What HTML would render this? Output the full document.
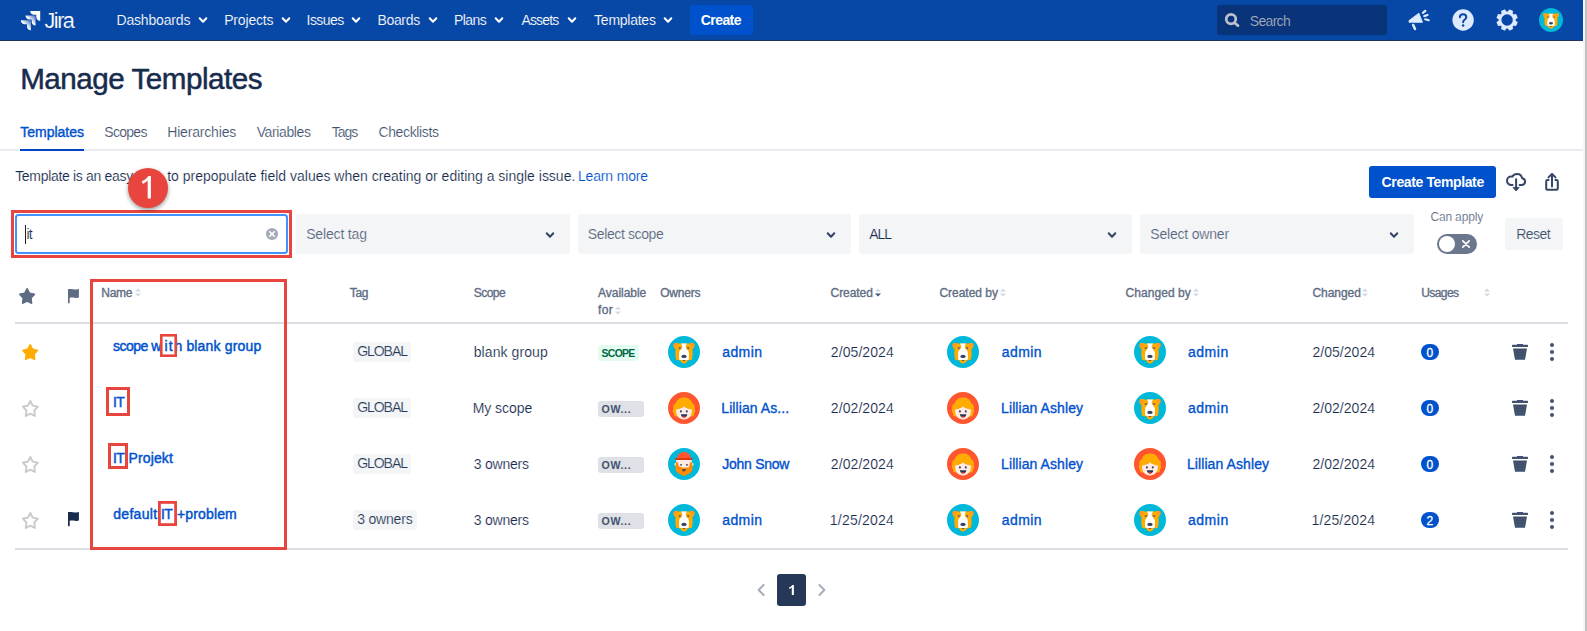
<!DOCTYPE html>
<html lang="en"><head><meta charset="utf-8"><title>Manage Templates - Jira</title>
<style>
html,body{margin:0;padding:0;background:#fff}
body{width:1587px;height:631px;overflow:hidden;position:relative;font-family:"Liberation Sans",sans-serif}
#p{position:absolute;left:0;top:0;width:1587px;height:631px;overflow:hidden}
#p>div,#p>svg,#p>span{position:absolute;display:block}
#p>span{white-space:pre;line-height:1}
</style></head>
<body><div id="p">
<div style="left:0px;top:0px;width:1583px;height:40px;background:#0747A6;border-radius:0px;"></div>
<div style="left:0px;top:40px;width:1583px;height:1px;background:#20335B;border-radius:0px;"></div>
<div style="left:1583px;top:0px;width:2px;height:631px;background:#F6F6F6;border-radius:0px;"></div>
<div style="left:1585px;top:0px;width:2px;height:631px;background:#C2C2C2;border-radius:0px;"></div>
<div style="left:690px;top:5px;width:63px;height:30px;background:#0052CC;border-radius:3px;"></div>
<div style="left:1217px;top:5px;width:170px;height:30px;background:#093479;border-radius:3px;"></div>
<svg style="left:197.3px;top:15px" width="12" height="10" viewBox="0 0 12 10"><path d="M2.7 3.2L6 6.800000000000001L9.3 3.2" fill="none" stroke="#FFFFFF" stroke-width="2" stroke-linecap="round" stroke-linejoin="round"/></svg>
<svg style="left:280.0px;top:15px" width="12" height="10" viewBox="0 0 12 10"><path d="M2.7 3.2L6 6.800000000000001L9.3 3.2" fill="none" stroke="#FFFFFF" stroke-width="2" stroke-linecap="round" stroke-linejoin="round"/></svg>
<svg style="left:350.4px;top:15px" width="12" height="10" viewBox="0 0 12 10"><path d="M2.7 3.2L6 6.800000000000001L9.3 3.2" fill="none" stroke="#FFFFFF" stroke-width="2" stroke-linecap="round" stroke-linejoin="round"/></svg>
<svg style="left:427.0px;top:15px" width="12" height="10" viewBox="0 0 12 10"><path d="M2.7 3.2L6 6.800000000000001L9.3 3.2" fill="none" stroke="#FFFFFF" stroke-width="2" stroke-linecap="round" stroke-linejoin="round"/></svg>
<svg style="left:493.2px;top:15px" width="12" height="10" viewBox="0 0 12 10"><path d="M2.7 3.2L6 6.800000000000001L9.3 3.2" fill="none" stroke="#FFFFFF" stroke-width="2" stroke-linecap="round" stroke-linejoin="round"/></svg>
<svg style="left:566.0px;top:15px" width="12" height="10" viewBox="0 0 12 10"><path d="M2.7 3.2L6 6.800000000000001L9.3 3.2" fill="none" stroke="#FFFFFF" stroke-width="2" stroke-linecap="round" stroke-linejoin="round"/></svg>
<svg style="left:662.2px;top:15px" width="12" height="10" viewBox="0 0 12 10"><path d="M2.7 3.2L6 6.800000000000001L9.3 3.2" fill="none" stroke="#FFFFFF" stroke-width="2" stroke-linecap="round" stroke-linejoin="round"/></svg>
<svg style="left:20px;top:10px" width="21" height="21" viewBox="0 0 21 21"><defs><linearGradient id="jg" x1="1" y1="0" x2="0.35" y2="0.65"><stop offset="0.1" stop-color="#fff" stop-opacity=".3"/><stop offset="0.8" stop-color="#fff"/></linearGradient></defs>
<path d="M10.2 .9L20.2 .9L20.2 10.9C18 10.9 16.3 9.2 16.3 7L16.3 4.8L14.1 4.8C11.9 4.8 10.2 3.1 10.2 .9Z" fill="#fff"/>
<path d="M5.5 5.5L15.6 5.5L15.6 15.6C13.4 15.6 11.7 13.9 11.7 11.7L11.7 9.5L9.4 9.5C7.2 9.5 5.5 7.7 5.5 5.5Z" fill="url(#jg)"/>
<path d="M.8 10.2L10.9 10.2L10.9 20.3C8.7 20.3 7 18.6 7 16.4L7 14.2L4.7 14.2C2.5 14.2 .8 12.4 .8 10.2Z" fill="url(#jg)"/></svg>
<svg style="left:1223px;top:12px" width="18" height="18" viewBox="0 0 18 18"><circle cx="8" cy="7.1" r="4.8" fill="none" stroke="#BCC1CD" stroke-width="2.7"/><path d="M11.8 11L15 13.6" stroke="#BCC1CD" stroke-width="2.7" stroke-linecap="round"/></svg>
<svg style="left:1406px;top:8px" width="26" height="24" viewBox="0 0 26 24"><path d="M3 12.6L3 14.2L16.4 14.3L12.9 5.2Z" fill="#DEEBFF" stroke="#DEEBFF" stroke-width=".9" stroke-linejoin="round"/><path d="M7.2 17L9 21" stroke="#DEEBFF" stroke-width="2.5" stroke-linecap="round"/><path d="M16.9 4.9L19.3 2.8M18.3 8.1L21.5 7M19.2 11.3L22.7 12.2" stroke="#DEEBFF" stroke-width="2.2" stroke-linecap="round"/></svg>
<svg style="left:1451px;top:8px" width="24" height="24" viewBox="0 0 24 24"><circle cx="12.1" cy="12" r="10.7" fill="#DEEBFF"/><path d="M8.9 9.3C8.9 7.5 10.3 6.3 12.1 6.3C13.9 6.3 15.3 7.5 15.3 9.2C15.3 11.6 12.1 11.6 12.1 14.3" fill="none" stroke="#0747A6" stroke-width="2" stroke-linecap="round"/><circle cx="12.1" cy="17.6" r="1.25" fill="#0747A6"/></svg>
<svg style="left:1495px;top:8px" width="24" height="24" viewBox="0 0 24 24"><path d="M22.02 14.38L20.80 17.33L18.62 16.81L16.91 18.52L17.43 20.70L14.48 21.92L13.30 20.01L10.90 20.01L9.72 21.92L6.77 20.70L7.29 18.52L5.58 16.81L3.40 17.33L2.18 14.38L4.09 13.20L4.09 10.80L2.18 9.62L3.40 6.67L5.58 7.19L7.29 5.48L6.77 3.30L9.72 2.08L10.90 3.99L13.30 3.99L14.48 2.08L17.43 3.30L16.91 5.48L18.62 7.19L20.80 6.67L22.02 9.62L20.11 10.80L20.11 13.20Z" fill="#DEEBFF" stroke="#DEEBFF" stroke-width="1.2" stroke-linejoin="round"/><circle cx="12.1" cy="12" r="5.7" fill="#0747A6"/></svg>
<svg class="av" style="left:1539px;top:8px" width="24" height="24" viewBox="0 0 32 32"><circle cx="16" cy="16" r="16" fill="#00B8D9"/><path d="M10 7.3C7.8 6.1 5.4 6.9 5.3 9C5.2 10.7 6 12.3 7.7 13.3L10.6 12Z" fill="#FF991F"/><path d="M22 7.3C24.2 6.1 26.6 6.9 26.7 9C26.8 10.7 26 12.3 24.3 13.3L21.4 12Z" fill="#FF991F"/><path d="M9.2 7.5L22.8 7.5C24 10 24.8 14 24.7 18C24.6 20.5 24.2 22.5 23.6 24L19.8 24.2C19.4 26.2 17.9 27.4 16 27.4C14.1 27.4 12.6 26.2 12.2 24.2L8.4 24C7.8 22.5 7.4 20.5 7.3 18C7.2 14 8 10 9.2 7.5Z" fill="#FFAB00"/><path d="M13 7.5L19 7.5L17.7 10.2C17.7 12.2 18.4 13 19.5 14C20.5 15 20.9 16 20.9 17.4L20.9 22.4C20.9 23.4 20.2 24.1 19.2 24.1L12.8 24.1C11.8 24.1 11.1 23.4 11.1 22.4L11.1 17.4C11.1 16 11.5 15 12.5 14C13.6 13 14.3 12.2 14.3 10.2Z" fill="#FFFFFF"/><ellipse cx="16" cy="20.4" rx="2.7" ry="1.65" fill="#344563"/><path d="M14.7 23.9L17.3 23.9L16 25.3Z" fill="#344563"/><rect x="10.8" y="11" width="1.9" height="2.1" rx=".6" fill="#5E6C84"/><rect x="19.3" y="11" width="1.9" height="2.1" rx=".6" fill="#5E6C84"/></svg>
<div style="left:0px;top:149px;width:1583px;height:2px;background:#EAEBF0;border-radius:0px;"></div>
<div style="left:19px;top:149px;width:1px;height:2px;background:#FFFFFF;border-radius:0px;"></div>
<div style="left:20px;top:149px;width:64px;height:2px;background:#0045C8;border-radius:0px;"></div>
<div style="left:1369px;top:166px;width:127px;height:32px;background:#0052CC;border-radius:3px;"></div>
<svg style="left:1504px;top:171px" width="24" height="22" viewBox="0 0 24 22"><path d="M8.6 14L7.4 14C4.9 14 3 12.1 3 9.7C3 7.3 4.9 5.5 7.2 5.5C7.6 5.5 8 5.55 8.4 5.65C9.3 3.9 11 2.9 13 2.9C15.6 2.9 17.7 4.7 18.1 7.2C19.8 7.5 21.1 8.9 21.1 10.6C21.1 12.5 19.6 14 17.7 14L15.6 14" fill="none" stroke="#344563" stroke-width="2" stroke-linecap="round" stroke-linejoin="round"/><path d="M12.1 8.2L12.1 17" stroke="#344563" stroke-width="2" stroke-linecap="round"/><path d="M9 16.4L15.2 16.4L12.1 20Z" fill="#344563" stroke="#344563" stroke-width=".8" stroke-linejoin="round"/></svg>
<svg style="left:1542px;top:170px" width="20" height="24" viewBox="0 0 20 24"><path d="M6.6 10.1L5.4 10.1C4.7 10.1 4.2 10.6 4.2 11.3L4.2 18.6C4.2 19.3 4.7 19.8 5.4 19.8L14.6 19.8C15.3 19.8 15.8 19.3 15.8 18.6L15.8 11.3C15.8 10.6 15.3 10.1 14.6 10.1L13.4 10.1" fill="none" stroke="#344563" stroke-width="2" stroke-linecap="round" stroke-linejoin="round"/><path d="M10 4.8L10 16.4M6.5 7.4L10 3.9L13.5 7.4" fill="none" stroke="#344563" stroke-width="2" stroke-linecap="round" stroke-linejoin="round"/></svg>
<div style="left:15px;top:214px;width:273px;height:40px;background:#FFFFFF;border-radius:3.5px;box-sizing:border-box;border:2px solid #4492FF;"></div>
<div style="left:25px;top:225px;width:1px;height:19px;background:#1E1E1E;border-radius:0px;"></div>
<svg style="left:265px;top:227px" width="14" height="14" viewBox="0 0 14 14"><circle cx="7" cy="7" r="6.1" fill="#A3ABB9"/><path d="M4.7 4.7L9.3 9.3M9.3 4.7L4.7 9.3" stroke="#fff" stroke-width="1.6" stroke-linecap="round"/></svg>
<div style="left:296px;top:214px;width:274px;height:40px;background:#F4F5F7;border-radius:3px;"></div>
<svg style="left:544px;top:229.5px" width="12" height="10" viewBox="0 0 12 10"><path d="M2.7 3.2L6 6.800000000000001L9.3 3.2" fill="none" stroke="#344563" stroke-width="2" stroke-linecap="round" stroke-linejoin="round"/></svg>
<div style="left:578px;top:214px;width:273px;height:40px;background:#F4F5F7;border-radius:3px;"></div>
<svg style="left:825px;top:229.5px" width="12" height="10" viewBox="0 0 12 10"><path d="M2.7 3.2L6 6.800000000000001L9.3 3.2" fill="none" stroke="#344563" stroke-width="2" stroke-linecap="round" stroke-linejoin="round"/></svg>
<div style="left:859px;top:214px;width:273px;height:40px;background:#F4F5F7;border-radius:3px;"></div>
<svg style="left:1106px;top:229.5px" width="12" height="10" viewBox="0 0 12 10"><path d="M2.7 3.2L6 6.800000000000001L9.3 3.2" fill="none" stroke="#344563" stroke-width="2" stroke-linecap="round" stroke-linejoin="round"/></svg>
<div style="left:1140px;top:214px;width:274px;height:40px;background:#F4F5F7;border-radius:3px;"></div>
<svg style="left:1388px;top:229.5px" width="12" height="10" viewBox="0 0 12 10"><path d="M2.7 3.2L6 6.800000000000001L9.3 3.2" fill="none" stroke="#344563" stroke-width="2" stroke-linecap="round" stroke-linejoin="round"/></svg>
<div style="left:1437px;top:234px;width:40px;height:20px;background:#6B778C;border-radius:10px;"></div>
<div style="left:1439px;top:236px;width:16px;height:16px;background:#FFFFFF;border-radius:8px;"></div>
<svg style="left:1461px;top:239px" width="10" height="10" viewBox="0 0 10 10"><path d="M1.8 1.8L8.2 8.2M8.2 1.8L1.8 8.2" stroke="#fff" stroke-width="1.7" stroke-linecap="round"/></svg>
<div style="left:1505px;top:218px;width:58px;height:32px;background:#F4F5F7;border-radius:3px;"></div>
<svg style="left:16.9px;top:285.8px" width="20.2" height="20" viewBox="0 0 20.2 20"><path d="M10.10 2.70L12.57 7.24L17.50 8.28L14.10 12.12L14.67 17.30L10.10 15.13L5.53 17.30L6.10 12.12L2.70 8.28L7.63 7.24Z" fill="#5E6C84" stroke="#5E6C84" stroke-width="1.4" stroke-linejoin="round"/></svg>
<svg style="left:66px;top:286.6px" width="16" height="19" viewBox="-2 -2 16 19"><rect x="0" y=".2" width="1.7" height="14.1" rx=".6" fill="#5E6C84"/><path d="M0 .2C2 -.3 5 -.2 7 .4C8.5 .7 9.8 .5 10.9 .1L10.9 8.6C9.8 9 8.5 9.1 7 8.8C5 8.4 3 8.4 1.7 8.7L0 8.7Z" fill="#5E6C84"/></svg>
<svg style="left:134.7px;top:288.2px" width="6" height="9" viewBox="0 0 6 9"><path d="M0 3.6L3 .6L6 3.6Z" fill="#D3D7DF"/><path d="M0 5.4L3 8.4L6 5.4Z" fill="#D3D7DF"/></svg>
<svg style="left:614.8px;top:305.5px" width="6" height="9" viewBox="0 0 6 9"><path d="M0 3.6L3 .6L6 3.6Z" fill="#D3D7DF"/><path d="M0 5.4L3 8.4L6 5.4Z" fill="#D3D7DF"/></svg>
<svg style="left:875.2px;top:288.2px" width="6" height="9" viewBox="0 0 6 9"><path d="M0 3.6L3 .6L6 3.6Z" fill="#D3D7DF"/><path d="M0 5.4L3 8.4L6 5.4Z" fill="#42526E"/></svg>
<svg style="left:1000px;top:288.2px" width="6" height="9" viewBox="0 0 6 9"><path d="M0 3.6L3 .6L6 3.6Z" fill="#D3D7DF"/><path d="M0 5.4L3 8.4L6 5.4Z" fill="#D3D7DF"/></svg>
<svg style="left:1193px;top:288.2px" width="6" height="9" viewBox="0 0 6 9"><path d="M0 3.6L3 .6L6 3.6Z" fill="#D3D7DF"/><path d="M0 5.4L3 8.4L6 5.4Z" fill="#D3D7DF"/></svg>
<svg style="left:1362.2px;top:288.2px" width="6" height="9" viewBox="0 0 6 9"><path d="M0 3.6L3 .6L6 3.6Z" fill="#D3D7DF"/><path d="M0 5.4L3 8.4L6 5.4Z" fill="#D3D7DF"/></svg>
<svg style="left:1484px;top:288.2px" width="6" height="9" viewBox="0 0 6 9"><path d="M0 3.6L3 .6L6 3.6Z" fill="#D3D7DF"/><path d="M0 5.4L3 8.4L6 5.4Z" fill="#D3D7DF"/></svg>
<div style="left:15px;top:322px;width:1553px;height:2px;background:#DDDFE6;border-radius:0px;"></div>
<div style="left:15px;top:548px;width:1553px;height:2px;background:#DDDFE6;border-radius:0px;"></div>
<svg style="left:19.9px;top:341.9px" width="20.3" height="20.2" viewBox="0 0 20.3 20.2"><path d="M10.15 2.70L12.64 7.31L17.60 8.35L14.17 12.25L14.75 17.50L10.15 15.30L5.55 17.50L6.13 12.25L2.70 8.35L7.66 7.31Z" fill="#FFAB00" stroke="#FFAB00" stroke-width="1.4" stroke-linejoin="round"/></svg>
<div style="left:353px;top:342px;width:58px;height:20px;background:#F4F5F7;border-radius:3px;"></div>
<div style="left:598px;top:345px;width:41px;height:16px;background:#E3FCEF;border-radius:3px;"></div>
<svg class="av" style="left:668px;top:336px" width="32" height="32" viewBox="0 0 32 32"><circle cx="16" cy="16" r="16" fill="#00B8D9"/><path d="M10 7.3C7.8 6.1 5.4 6.9 5.3 9C5.2 10.7 6 12.3 7.7 13.3L10.6 12Z" fill="#FF991F"/><path d="M22 7.3C24.2 6.1 26.6 6.9 26.7 9C26.8 10.7 26 12.3 24.3 13.3L21.4 12Z" fill="#FF991F"/><path d="M9.2 7.5L22.8 7.5C24 10 24.8 14 24.7 18C24.6 20.5 24.2 22.5 23.6 24L19.8 24.2C19.4 26.2 17.9 27.4 16 27.4C14.1 27.4 12.6 26.2 12.2 24.2L8.4 24C7.8 22.5 7.4 20.5 7.3 18C7.2 14 8 10 9.2 7.5Z" fill="#FFAB00"/><path d="M13 7.5L19 7.5L17.7 10.2C17.7 12.2 18.4 13 19.5 14C20.5 15 20.9 16 20.9 17.4L20.9 22.4C20.9 23.4 20.2 24.1 19.2 24.1L12.8 24.1C11.8 24.1 11.1 23.4 11.1 22.4L11.1 17.4C11.1 16 11.5 15 12.5 14C13.6 13 14.3 12.2 14.3 10.2Z" fill="#FFFFFF"/><ellipse cx="16" cy="20.4" rx="2.7" ry="1.65" fill="#344563"/><path d="M14.7 23.9L17.3 23.9L16 25.3Z" fill="#344563"/><rect x="10.8" y="11" width="1.9" height="2.1" rx=".6" fill="#5E6C84"/><rect x="19.3" y="11" width="1.9" height="2.1" rx=".6" fill="#5E6C84"/></svg>
<svg class="av" style="left:947px;top:336px" width="32" height="32" viewBox="0 0 32 32"><circle cx="16" cy="16" r="16" fill="#00B8D9"/><path d="M10 7.3C7.8 6.1 5.4 6.9 5.3 9C5.2 10.7 6 12.3 7.7 13.3L10.6 12Z" fill="#FF991F"/><path d="M22 7.3C24.2 6.1 26.6 6.9 26.7 9C26.8 10.7 26 12.3 24.3 13.3L21.4 12Z" fill="#FF991F"/><path d="M9.2 7.5L22.8 7.5C24 10 24.8 14 24.7 18C24.6 20.5 24.2 22.5 23.6 24L19.8 24.2C19.4 26.2 17.9 27.4 16 27.4C14.1 27.4 12.6 26.2 12.2 24.2L8.4 24C7.8 22.5 7.4 20.5 7.3 18C7.2 14 8 10 9.2 7.5Z" fill="#FFAB00"/><path d="M13 7.5L19 7.5L17.7 10.2C17.7 12.2 18.4 13 19.5 14C20.5 15 20.9 16 20.9 17.4L20.9 22.4C20.9 23.4 20.2 24.1 19.2 24.1L12.8 24.1C11.8 24.1 11.1 23.4 11.1 22.4L11.1 17.4C11.1 16 11.5 15 12.5 14C13.6 13 14.3 12.2 14.3 10.2Z" fill="#FFFFFF"/><ellipse cx="16" cy="20.4" rx="2.7" ry="1.65" fill="#344563"/><path d="M14.7 23.9L17.3 23.9L16 25.3Z" fill="#344563"/><rect x="10.8" y="11" width="1.9" height="2.1" rx=".6" fill="#5E6C84"/><rect x="19.3" y="11" width="1.9" height="2.1" rx=".6" fill="#5E6C84"/></svg>
<svg class="av" style="left:1134px;top:336px" width="32" height="32" viewBox="0 0 32 32"><circle cx="16" cy="16" r="16" fill="#00B8D9"/><path d="M10 7.3C7.8 6.1 5.4 6.9 5.3 9C5.2 10.7 6 12.3 7.7 13.3L10.6 12Z" fill="#FF991F"/><path d="M22 7.3C24.2 6.1 26.6 6.9 26.7 9C26.8 10.7 26 12.3 24.3 13.3L21.4 12Z" fill="#FF991F"/><path d="M9.2 7.5L22.8 7.5C24 10 24.8 14 24.7 18C24.6 20.5 24.2 22.5 23.6 24L19.8 24.2C19.4 26.2 17.9 27.4 16 27.4C14.1 27.4 12.6 26.2 12.2 24.2L8.4 24C7.8 22.5 7.4 20.5 7.3 18C7.2 14 8 10 9.2 7.5Z" fill="#FFAB00"/><path d="M13 7.5L19 7.5L17.7 10.2C17.7 12.2 18.4 13 19.5 14C20.5 15 20.9 16 20.9 17.4L20.9 22.4C20.9 23.4 20.2 24.1 19.2 24.1L12.8 24.1C11.8 24.1 11.1 23.4 11.1 22.4L11.1 17.4C11.1 16 11.5 15 12.5 14C13.6 13 14.3 12.2 14.3 10.2Z" fill="#FFFFFF"/><ellipse cx="16" cy="20.4" rx="2.7" ry="1.65" fill="#344563"/><path d="M14.7 23.9L17.3 23.9L16 25.3Z" fill="#344563"/><rect x="10.8" y="11" width="1.9" height="2.1" rx=".6" fill="#5E6C84"/><rect x="19.3" y="11" width="1.9" height="2.1" rx=".6" fill="#5E6C84"/></svg>
<div style="left:1421px;top:344px;width:18px;height:16px;background:#0052CC;border-radius:8px;"></div>
<svg style="left:1510px;top:342px" width="20" height="20" viewBox="0 0 20 20"><path d="M7 2L13 2L13 3L7 3Z" fill="#42526E"/><rect x="2" y="2.8" width="16" height="2.1" rx=".5" fill="#42526E"/><path d="M3 6.6L17 6.6L15 17.8L5 17.8Z" fill="#42526E"/></svg>
<div style="left:1550.1px;top:343.0px;width:3.8px;height:3.8px;background:#42526E;border-radius:2px;"></div>
<div style="left:1550.1px;top:350.1px;width:3.8px;height:3.8px;background:#42526E;border-radius:2px;"></div>
<div style="left:1550.1px;top:357.20000000000005px;width:3.8px;height:3.8px;background:#42526E;border-radius:2px;"></div>
<svg style="left:19.6px;top:397.8px" width="20.7" height="20.9" viewBox="0 0 20.7 20.9"><path d="M10.35 2.90L12.74 7.74L17.80 8.67L14.22 12.59L14.95 18.00L10.35 15.59L5.75 18.00L6.48 12.59L2.90 8.67L7.96 7.74Z" fill="none" stroke="#C8C8C8" stroke-width="1.8" stroke-linejoin="round"/></svg>
<div style="left:353px;top:398px;width:58px;height:20px;background:#F4F5F7;border-radius:3px;"></div>
<div style="left:598px;top:401px;width:46px;height:16px;background:#DFE1E6;border-radius:3px;"></div>
<svg class="av" style="left:668px;top:392px" width="32" height="32" viewBox="0 0 32 32"><circle cx="16" cy="16" r="16" fill="#FF5630"/><path d="M16 5.4C20.6 5.4 23.6 8 24.4 11.4C26.4 12.2 27.4 14.4 26.6 16.6C27.6 18.4 27.2 20.4 26 21.4C26.2 23 25.6 24.2 24.4 24.6L7.6 24.6C6.4 24.2 5.8 23 6 21.4C4.8 20.4 4.4 18.4 5.4 16.6C4.6 14.4 5.6 12.2 7.6 11.4C8.4 8 11.4 5.4 16 5.4Z" fill="#FFAB00"/><path d="M8 17.4C10.4 17.2 14.4 16.4 16 14.2C17.6 16.4 21.6 17.2 24 17.4L23.8 20C23.6 24.4 20.4 27.4 16 27.4C11.6 27.4 8.4 24.4 8.2 20Z" fill="#FFEBE6"/><circle cx="12.9" cy="19.4" r="1.05" fill="#344563"/><circle cx="18.8" cy="19.4" r="1.05" fill="#344563"/><path d="M12.9 22.3L19.3 22.3C19.3 24.2 17.9 25.6 16.1 25.6C14.3 25.6 12.9 24.2 12.9 22.3Z" fill="#253858"/><ellipse cx="16.1" cy="24.7" rx="1.5" ry=".9" fill="#DE350B"/></svg>
<svg class="av" style="left:947px;top:392px" width="32" height="32" viewBox="0 0 32 32"><circle cx="16" cy="16" r="16" fill="#FF5630"/><path d="M16 5.4C20.6 5.4 23.6 8 24.4 11.4C26.4 12.2 27.4 14.4 26.6 16.6C27.6 18.4 27.2 20.4 26 21.4C26.2 23 25.6 24.2 24.4 24.6L7.6 24.6C6.4 24.2 5.8 23 6 21.4C4.8 20.4 4.4 18.4 5.4 16.6C4.6 14.4 5.6 12.2 7.6 11.4C8.4 8 11.4 5.4 16 5.4Z" fill="#FFAB00"/><path d="M8 17.4C10.4 17.2 14.4 16.4 16 14.2C17.6 16.4 21.6 17.2 24 17.4L23.8 20C23.6 24.4 20.4 27.4 16 27.4C11.6 27.4 8.4 24.4 8.2 20Z" fill="#FFEBE6"/><circle cx="12.9" cy="19.4" r="1.05" fill="#344563"/><circle cx="18.8" cy="19.4" r="1.05" fill="#344563"/><path d="M12.9 22.3L19.3 22.3C19.3 24.2 17.9 25.6 16.1 25.6C14.3 25.6 12.9 24.2 12.9 22.3Z" fill="#253858"/><ellipse cx="16.1" cy="24.7" rx="1.5" ry=".9" fill="#DE350B"/></svg>
<svg class="av" style="left:1134px;top:392px" width="32" height="32" viewBox="0 0 32 32"><circle cx="16" cy="16" r="16" fill="#00B8D9"/><path d="M10 7.3C7.8 6.1 5.4 6.9 5.3 9C5.2 10.7 6 12.3 7.7 13.3L10.6 12Z" fill="#FF991F"/><path d="M22 7.3C24.2 6.1 26.6 6.9 26.7 9C26.8 10.7 26 12.3 24.3 13.3L21.4 12Z" fill="#FF991F"/><path d="M9.2 7.5L22.8 7.5C24 10 24.8 14 24.7 18C24.6 20.5 24.2 22.5 23.6 24L19.8 24.2C19.4 26.2 17.9 27.4 16 27.4C14.1 27.4 12.6 26.2 12.2 24.2L8.4 24C7.8 22.5 7.4 20.5 7.3 18C7.2 14 8 10 9.2 7.5Z" fill="#FFAB00"/><path d="M13 7.5L19 7.5L17.7 10.2C17.7 12.2 18.4 13 19.5 14C20.5 15 20.9 16 20.9 17.4L20.9 22.4C20.9 23.4 20.2 24.1 19.2 24.1L12.8 24.1C11.8 24.1 11.1 23.4 11.1 22.4L11.1 17.4C11.1 16 11.5 15 12.5 14C13.6 13 14.3 12.2 14.3 10.2Z" fill="#FFFFFF"/><ellipse cx="16" cy="20.4" rx="2.7" ry="1.65" fill="#344563"/><path d="M14.7 23.9L17.3 23.9L16 25.3Z" fill="#344563"/><rect x="10.8" y="11" width="1.9" height="2.1" rx=".6" fill="#5E6C84"/><rect x="19.3" y="11" width="1.9" height="2.1" rx=".6" fill="#5E6C84"/></svg>
<div style="left:1421px;top:400px;width:18px;height:16px;background:#0052CC;border-radius:8px;"></div>
<svg style="left:1510px;top:398px" width="20" height="20" viewBox="0 0 20 20"><path d="M7 2L13 2L13 3L7 3Z" fill="#42526E"/><rect x="2" y="2.8" width="16" height="2.1" rx=".5" fill="#42526E"/><path d="M3 6.6L17 6.6L15 17.8L5 17.8Z" fill="#42526E"/></svg>
<div style="left:1550.1px;top:399.0px;width:3.8px;height:3.8px;background:#42526E;border-radius:2px;"></div>
<div style="left:1550.1px;top:406.1px;width:3.8px;height:3.8px;background:#42526E;border-radius:2px;"></div>
<div style="left:1550.1px;top:413.20000000000005px;width:3.8px;height:3.8px;background:#42526E;border-radius:2px;"></div>
<svg style="left:19.6px;top:453.8px" width="20.7" height="20.9" viewBox="0 0 20.7 20.9"><path d="M10.35 2.90L12.74 7.74L17.80 8.67L14.22 12.59L14.95 18.00L10.35 15.59L5.75 18.00L6.48 12.59L2.90 8.67L7.96 7.74Z" fill="none" stroke="#C8C8C8" stroke-width="1.8" stroke-linejoin="round"/></svg>
<div style="left:353px;top:454px;width:58px;height:20px;background:#F4F5F7;border-radius:3px;"></div>
<div style="left:598px;top:457px;width:46px;height:16px;background:#DFE1E6;border-radius:3px;"></div>
<svg class="av" style="left:668px;top:448px" width="32" height="32" viewBox="0 0 32 32"><circle cx="16" cy="16" r="16" fill="#00B8D9"/><ellipse cx="7.7" cy="16.4" rx="1.2" ry="1.7" fill="#FFEBE6"/><ellipse cx="24.3" cy="16.4" rx="1.2" ry="1.7" fill="#FFEBE6"/><rect x="8.2" y="11" width="15.6" height="9.6" fill="#FFEBE6"/><path d="M9.2 10.4C9.2 6.6 12.2 4 16 4C19.8 4 22.8 6.6 22.8 10.4Z" fill="#FF5630"/><rect x="7.1" y="10.1" width="17.4" height="1.9" rx=".9" fill="#DE350B"/><path d="M8.2 14.2L9.8 14.2C10.4 16 10.6 18 11.4 18.8L14.6 19.4L16 20.1L17.4 19.4L20.6 19.4C21.4 18.6 21.6 16 22.2 14.2L23.8 14.2C24.6 16.6 25 20.4 24 22.4C23.6 24 22.4 24.4 21.6 25C20.8 26.4 19.4 26.4 18.6 26.6C17.8 27.8 16.6 28 16 28C15.4 28 14.2 27.8 13.4 26.6C12.6 26.4 11.2 26.4 10.4 25C9.6 24.4 8.4 24 8 22.4C7 20.4 7.4 16.6 8.2 14.2Z" fill="#FF8B00"/><rect x="12.1" y="15.9" width="1.9" height="1.8" rx=".6" fill="#505F79"/><rect x="18" y="15.9" width="1.9" height="1.8" rx=".6" fill="#505F79"/><path d="M14 21.2L17.8 21.2C17.8 22.6 17 23.4 15.9 23.4C14.8 23.4 14 22.6 14 21.2Z" fill="#344563"/></svg>
<svg class="av" style="left:947px;top:448px" width="32" height="32" viewBox="0 0 32 32"><circle cx="16" cy="16" r="16" fill="#FF5630"/><path d="M16 5.4C20.6 5.4 23.6 8 24.4 11.4C26.4 12.2 27.4 14.4 26.6 16.6C27.6 18.4 27.2 20.4 26 21.4C26.2 23 25.6 24.2 24.4 24.6L7.6 24.6C6.4 24.2 5.8 23 6 21.4C4.8 20.4 4.4 18.4 5.4 16.6C4.6 14.4 5.6 12.2 7.6 11.4C8.4 8 11.4 5.4 16 5.4Z" fill="#FFAB00"/><path d="M8 17.4C10.4 17.2 14.4 16.4 16 14.2C17.6 16.4 21.6 17.2 24 17.4L23.8 20C23.6 24.4 20.4 27.4 16 27.4C11.6 27.4 8.4 24.4 8.2 20Z" fill="#FFEBE6"/><circle cx="12.9" cy="19.4" r="1.05" fill="#344563"/><circle cx="18.8" cy="19.4" r="1.05" fill="#344563"/><path d="M12.9 22.3L19.3 22.3C19.3 24.2 17.9 25.6 16.1 25.6C14.3 25.6 12.9 24.2 12.9 22.3Z" fill="#253858"/><ellipse cx="16.1" cy="24.7" rx="1.5" ry=".9" fill="#DE350B"/></svg>
<svg class="av" style="left:1134px;top:448px" width="32" height="32" viewBox="0 0 32 32"><circle cx="16" cy="16" r="16" fill="#FF5630"/><path d="M16 5.4C20.6 5.4 23.6 8 24.4 11.4C26.4 12.2 27.4 14.4 26.6 16.6C27.6 18.4 27.2 20.4 26 21.4C26.2 23 25.6 24.2 24.4 24.6L7.6 24.6C6.4 24.2 5.8 23 6 21.4C4.8 20.4 4.4 18.4 5.4 16.6C4.6 14.4 5.6 12.2 7.6 11.4C8.4 8 11.4 5.4 16 5.4Z" fill="#FFAB00"/><path d="M8 17.4C10.4 17.2 14.4 16.4 16 14.2C17.6 16.4 21.6 17.2 24 17.4L23.8 20C23.6 24.4 20.4 27.4 16 27.4C11.6 27.4 8.4 24.4 8.2 20Z" fill="#FFEBE6"/><circle cx="12.9" cy="19.4" r="1.05" fill="#344563"/><circle cx="18.8" cy="19.4" r="1.05" fill="#344563"/><path d="M12.9 22.3L19.3 22.3C19.3 24.2 17.9 25.6 16.1 25.6C14.3 25.6 12.9 24.2 12.9 22.3Z" fill="#253858"/><ellipse cx="16.1" cy="24.7" rx="1.5" ry=".9" fill="#DE350B"/></svg>
<div style="left:1421px;top:456px;width:18px;height:16px;background:#0052CC;border-radius:8px;"></div>
<svg style="left:1510px;top:454px" width="20" height="20" viewBox="0 0 20 20"><path d="M7 2L13 2L13 3L7 3Z" fill="#42526E"/><rect x="2" y="2.8" width="16" height="2.1" rx=".5" fill="#42526E"/><path d="M3 6.6L17 6.6L15 17.8L5 17.8Z" fill="#42526E"/></svg>
<div style="left:1550.1px;top:455.0px;width:3.8px;height:3.8px;background:#42526E;border-radius:2px;"></div>
<div style="left:1550.1px;top:462.1px;width:3.8px;height:3.8px;background:#42526E;border-radius:2px;"></div>
<div style="left:1550.1px;top:469.20000000000005px;width:3.8px;height:3.8px;background:#42526E;border-radius:2px;"></div>
<svg style="left:19.6px;top:509.8px" width="20.7" height="20.9" viewBox="0 0 20.7 20.9"><path d="M10.35 2.90L12.74 7.74L17.80 8.67L14.22 12.59L14.95 18.00L10.35 15.59L5.75 18.00L6.48 12.59L2.90 8.67L7.96 7.74Z" fill="none" stroke="#C8C8C8" stroke-width="1.8" stroke-linejoin="round"/></svg>
<svg style="left:66px;top:509.5px" width="16" height="19" viewBox="-2 -2 16 19"><rect x="0" y=".2" width="1.7" height="14.1" rx=".6" fill="#172B4D"/><path d="M0 .2C2 -.3 5 -.2 7 .4C8.5 .7 9.8 .5 10.9 .1L10.9 8.6C9.8 9 8.5 9.1 7 8.8C5 8.4 3 8.4 1.7 8.7L0 8.7Z" fill="#172B4D"/></svg>
<div style="left:353px;top:510px;width:64px;height:20px;background:#F4F5F7;border-radius:3px;"></div>
<div style="left:598px;top:513px;width:46px;height:16px;background:#DFE1E6;border-radius:3px;"></div>
<svg class="av" style="left:668px;top:504px" width="32" height="32" viewBox="0 0 32 32"><circle cx="16" cy="16" r="16" fill="#00B8D9"/><path d="M10 7.3C7.8 6.1 5.4 6.9 5.3 9C5.2 10.7 6 12.3 7.7 13.3L10.6 12Z" fill="#FF991F"/><path d="M22 7.3C24.2 6.1 26.6 6.9 26.7 9C26.8 10.7 26 12.3 24.3 13.3L21.4 12Z" fill="#FF991F"/><path d="M9.2 7.5L22.8 7.5C24 10 24.8 14 24.7 18C24.6 20.5 24.2 22.5 23.6 24L19.8 24.2C19.4 26.2 17.9 27.4 16 27.4C14.1 27.4 12.6 26.2 12.2 24.2L8.4 24C7.8 22.5 7.4 20.5 7.3 18C7.2 14 8 10 9.2 7.5Z" fill="#FFAB00"/><path d="M13 7.5L19 7.5L17.7 10.2C17.7 12.2 18.4 13 19.5 14C20.5 15 20.9 16 20.9 17.4L20.9 22.4C20.9 23.4 20.2 24.1 19.2 24.1L12.8 24.1C11.8 24.1 11.1 23.4 11.1 22.4L11.1 17.4C11.1 16 11.5 15 12.5 14C13.6 13 14.3 12.2 14.3 10.2Z" fill="#FFFFFF"/><ellipse cx="16" cy="20.4" rx="2.7" ry="1.65" fill="#344563"/><path d="M14.7 23.9L17.3 23.9L16 25.3Z" fill="#344563"/><rect x="10.8" y="11" width="1.9" height="2.1" rx=".6" fill="#5E6C84"/><rect x="19.3" y="11" width="1.9" height="2.1" rx=".6" fill="#5E6C84"/></svg>
<svg class="av" style="left:947px;top:504px" width="32" height="32" viewBox="0 0 32 32"><circle cx="16" cy="16" r="16" fill="#00B8D9"/><path d="M10 7.3C7.8 6.1 5.4 6.9 5.3 9C5.2 10.7 6 12.3 7.7 13.3L10.6 12Z" fill="#FF991F"/><path d="M22 7.3C24.2 6.1 26.6 6.9 26.7 9C26.8 10.7 26 12.3 24.3 13.3L21.4 12Z" fill="#FF991F"/><path d="M9.2 7.5L22.8 7.5C24 10 24.8 14 24.7 18C24.6 20.5 24.2 22.5 23.6 24L19.8 24.2C19.4 26.2 17.9 27.4 16 27.4C14.1 27.4 12.6 26.2 12.2 24.2L8.4 24C7.8 22.5 7.4 20.5 7.3 18C7.2 14 8 10 9.2 7.5Z" fill="#FFAB00"/><path d="M13 7.5L19 7.5L17.7 10.2C17.7 12.2 18.4 13 19.5 14C20.5 15 20.9 16 20.9 17.4L20.9 22.4C20.9 23.4 20.2 24.1 19.2 24.1L12.8 24.1C11.8 24.1 11.1 23.4 11.1 22.4L11.1 17.4C11.1 16 11.5 15 12.5 14C13.6 13 14.3 12.2 14.3 10.2Z" fill="#FFFFFF"/><ellipse cx="16" cy="20.4" rx="2.7" ry="1.65" fill="#344563"/><path d="M14.7 23.9L17.3 23.9L16 25.3Z" fill="#344563"/><rect x="10.8" y="11" width="1.9" height="2.1" rx=".6" fill="#5E6C84"/><rect x="19.3" y="11" width="1.9" height="2.1" rx=".6" fill="#5E6C84"/></svg>
<svg class="av" style="left:1134px;top:504px" width="32" height="32" viewBox="0 0 32 32"><circle cx="16" cy="16" r="16" fill="#00B8D9"/><path d="M10 7.3C7.8 6.1 5.4 6.9 5.3 9C5.2 10.7 6 12.3 7.7 13.3L10.6 12Z" fill="#FF991F"/><path d="M22 7.3C24.2 6.1 26.6 6.9 26.7 9C26.8 10.7 26 12.3 24.3 13.3L21.4 12Z" fill="#FF991F"/><path d="M9.2 7.5L22.8 7.5C24 10 24.8 14 24.7 18C24.6 20.5 24.2 22.5 23.6 24L19.8 24.2C19.4 26.2 17.9 27.4 16 27.4C14.1 27.4 12.6 26.2 12.2 24.2L8.4 24C7.8 22.5 7.4 20.5 7.3 18C7.2 14 8 10 9.2 7.5Z" fill="#FFAB00"/><path d="M13 7.5L19 7.5L17.7 10.2C17.7 12.2 18.4 13 19.5 14C20.5 15 20.9 16 20.9 17.4L20.9 22.4C20.9 23.4 20.2 24.1 19.2 24.1L12.8 24.1C11.8 24.1 11.1 23.4 11.1 22.4L11.1 17.4C11.1 16 11.5 15 12.5 14C13.6 13 14.3 12.2 14.3 10.2Z" fill="#FFFFFF"/><ellipse cx="16" cy="20.4" rx="2.7" ry="1.65" fill="#344563"/><path d="M14.7 23.9L17.3 23.9L16 25.3Z" fill="#344563"/><rect x="10.8" y="11" width="1.9" height="2.1" rx=".6" fill="#5E6C84"/><rect x="19.3" y="11" width="1.9" height="2.1" rx=".6" fill="#5E6C84"/></svg>
<div style="left:1421px;top:512px;width:18px;height:16px;background:#0052CC;border-radius:8px;"></div>
<svg style="left:1510px;top:510px" width="20" height="20" viewBox="0 0 20 20"><path d="M7 2L13 2L13 3L7 3Z" fill="#42526E"/><rect x="2" y="2.8" width="16" height="2.1" rx=".5" fill="#42526E"/><path d="M3 6.6L17 6.6L15 17.8L5 17.8Z" fill="#42526E"/></svg>
<div style="left:1550.1px;top:511.0px;width:3.8px;height:3.8px;background:#42526E;border-radius:2px;"></div>
<div style="left:1550.1px;top:518.1px;width:3.8px;height:3.8px;background:#42526E;border-radius:2px;"></div>
<div style="left:1550.1px;top:525.2px;width:3.8px;height:3.8px;background:#42526E;border-radius:2px;"></div>
<div style="left:777px;top:574px;width:29px;height:32px;background:#253858;border-radius:3px;"></div>
<svg style="left:787px;top:583px" width="10" height="14" viewBox="0 0 10 14"><path d="M6.9 1.9L5.3 1.9C4.6 3 3.5 3.8 2 4.4L2.5 6C3.4 5.7 4.2 5.2 4.8 4.6L4.8 12L6.9 12Z" fill="#fff"/></svg>
<svg style="left:755px;top:582px" width="12" height="16" viewBox="0 0 12 16"><path d="M8.6 3L3.6 8L8.6 13" fill="none" stroke="#A5ADBA" stroke-width="2" stroke-linecap="round" stroke-linejoin="round"/></svg>
<svg style="left:816px;top:582px" width="12" height="16" viewBox="0 0 12 16"><path d="M3.4 3L8.4 8L3.4 13" fill="none" stroke="#A5ADBA" stroke-width="2" stroke-linecap="round" stroke-linejoin="round"/></svg>
<span style="left:116.50px;top:13.00px;font-size:14px;color:#FFFFFF;letter-spacing:-0.177px;-webkit-text-stroke:0.15px #0747A6;">Dashboards</span>
<span style="left:224.20px;top:13.00px;font-size:14px;color:#FFFFFF;letter-spacing:-0.167px;-webkit-text-stroke:0.15px #0747A6;">Projects</span>
<span style="left:306.60px;top:13.00px;font-size:14px;color:#FFFFFF;letter-spacing:-0.572px;-webkit-text-stroke:0.15px #0747A6;">Issues</span>
<span style="left:377.40px;top:13.00px;font-size:14px;color:#FFFFFF;letter-spacing:-0.312px;-webkit-text-stroke:0.15px #0747A6;">Boards</span>
<span style="left:454.00px;top:13.00px;font-size:14px;color:#FFFFFF;letter-spacing:-0.555px;-webkit-text-stroke:0.15px #0747A6;">Plans</span>
<span style="left:521.50px;top:13.00px;font-size:14px;color:#FFFFFF;letter-spacing:-0.863px;-webkit-text-stroke:0.15px #0747A6;">Assets</span>
<span style="left:594.10px;top:13.00px;font-size:14px;color:#FFFFFF;letter-spacing:-0.251px;-webkit-text-stroke:0.15px #0747A6;">Templates</span>
<span style="left:700.80px;top:13.00px;font-size:14px;color:#FFFFFF;font-weight:700;letter-spacing:-0.579px;">Create</span>
<span style="left:1249.80px;top:14.00px;font-size:14px;color:#A7AEBD;letter-spacing:-0.694px;-webkit-text-stroke:0.15px #093479;">Search</span>
<span style="left:44.60px;top:10.00px;font-size:21.6px;color:#FFFFFF;letter-spacing:-1.528px;-webkit-text-stroke:0.15px #0747A6;">Jira</span>
<span style="left:20.20px;top:64.00px;font-size:29.6px;color:#172B4D;letter-spacing:-0.470px;-webkit-text-stroke:0.5px #172B4D;">Manage Templates</span>
<span style="left:20.20px;top:125.00px;font-size:14px;color:#0052CC;-webkit-text-stroke:0.4px #0052CC;">Templates</span>
<span style="left:104.30px;top:125.00px;font-size:14px;color:#42526E;letter-spacing:-0.719px;-webkit-text-stroke:0.15px #FFFFFF;">Scopes</span>
<span style="left:167.20px;top:125.00px;font-size:14px;color:#42526E;letter-spacing:-0.170px;-webkit-text-stroke:0.15px #FFFFFF;">Hierarchies</span>
<span style="left:256.70px;top:125.00px;font-size:14px;color:#42526E;letter-spacing:-0.391px;-webkit-text-stroke:0.15px #FFFFFF;">Variables</span>
<span style="left:331.80px;top:125.00px;font-size:14px;color:#42526E;letter-spacing:-1.024px;-webkit-text-stroke:0.15px #FFFFFF;">Tags</span>
<span style="left:378.40px;top:125.00px;font-size:14px;color:#42526E;letter-spacing:-0.355px;-webkit-text-stroke:0.15px #FFFFFF;">Checklists</span>
<span style="left:15.20px;top:169.00px;font-size:14px;color:#172B4D;letter-spacing:-0.318px;-webkit-text-stroke:0.15px #FFFFFF;">Template is an easy</span>
<span style="left:167.20px;top:169.00px;font-size:14px;color:#172B4D;letter-spacing:-0.007px;-webkit-text-stroke:0.15px #FFFFFF;">to prepopulate field values when creating or editing a single issue.</span>
<span style="left:578.00px;top:169.00px;font-size:14px;color:#0052CC;letter-spacing:-0.167px;-webkit-text-stroke:0.15px #FFFFFF;">Learn more</span>
<span style="left:1381.60px;top:175.00px;font-size:14px;color:#FFFFFF;font-weight:700;letter-spacing:-0.379px;">Create Template</span>
<span style="left:26.50px;top:227.00px;font-size:14px;color:#172B4D;letter-spacing:-0.810px;-webkit-text-stroke:0.15px #FFFFFF;">it</span>
<span style="left:306.20px;top:227.00px;font-size:14px;color:#58667E;letter-spacing:-0.164px;-webkit-text-stroke:0.15px #F4F5F7;">Select tag</span>
<span style="left:587.80px;top:227.00px;font-size:14px;color:#58667E;letter-spacing:-0.379px;-webkit-text-stroke:0.15px #F4F5F7;">Select scope</span>
<span style="left:869.30px;top:227.00px;font-size:14px;color:#172B4D;letter-spacing:-1.050px;-webkit-text-stroke:0.15px #F4F5F7;">ALL</span>
<span style="left:1150.30px;top:227.00px;font-size:14px;color:#58667E;letter-spacing:-0.197px;-webkit-text-stroke:0.15px #F4F5F7;">Select owner</span>
<span style="left:1430.40px;top:211.00px;font-size:12px;color:#58667E;letter-spacing:-0.154px;-webkit-text-stroke:0.15px #FFFFFF;">Can apply</span>
<span style="left:1516.20px;top:227.00px;font-size:14px;color:#42526E;letter-spacing:-0.546px;-webkit-text-stroke:0.15px #F4F5F7;">Reset</span>
<span style="left:101.30px;top:287.00px;font-size:12px;color:#5E6C84;letter-spacing:-0.279px;-webkit-text-stroke:0.35px #5E6C84;">Name</span>
<span style="left:349.70px;top:287.00px;font-size:12px;color:#5E6C84;letter-spacing:-0.287px;-webkit-text-stroke:0.35px #5E6C84;">Tag</span>
<span style="left:473.70px;top:287.00px;font-size:12px;color:#5E6C84;letter-spacing:-0.513px;-webkit-text-stroke:0.35px #5E6C84;">Scope</span>
<span style="left:598.00px;top:287.00px;font-size:12px;color:#5E6C84;letter-spacing:-0.026px;-webkit-text-stroke:0.35px #5E6C84;">Available</span>
<span style="left:598.00px;top:304.00px;font-size:12px;color:#5E6C84;letter-spacing:0.396px;-webkit-text-stroke:0.35px #5E6C84;">for</span>
<span style="left:660.20px;top:287.00px;font-size:12px;color:#5E6C84;letter-spacing:-0.209px;-webkit-text-stroke:0.35px #5E6C84;">Owners</span>
<span style="left:830.60px;top:287.00px;font-size:12px;color:#5E6C84;letter-spacing:-0.070px;-webkit-text-stroke:0.35px #5E6C84;">Created</span>
<span style="left:939.40px;top:287.00px;font-size:12px;color:#5E6C84;letter-spacing:-0.011px;-webkit-text-stroke:0.35px #5E6C84;">Created by</span>
<span style="left:1125.50px;top:287.00px;font-size:12px;color:#5E6C84;letter-spacing:0.065px;-webkit-text-stroke:0.35px #5E6C84;">Changed by</span>
<span style="left:1312.40px;top:287.00px;font-size:12px;color:#5E6C84;letter-spacing:-0.039px;-webkit-text-stroke:0.35px #5E6C84;">Changed</span>
<span style="left:1421.30px;top:287.00px;font-size:12px;color:#5E6C84;letter-spacing:-0.597px;-webkit-text-stroke:0.35px #5E6C84;">Usages</span>
<span style="left:113.10px;top:339.00px;font-size:14px;color:#0052CC;letter-spacing:-0.525px;-webkit-text-stroke:0.45px #0052CC;">scope w</span>
<span style="left:164.50px;top:339.00px;font-size:14px;color:#0052CC;letter-spacing:1.090px;-webkit-text-stroke:0.45px #0052CC;">it</span>
<span style="left:174.40px;top:339.00px;font-size:14px;color:#0052CC;letter-spacing:0.162px;-webkit-text-stroke:0.45px #0052CC;">h blank group</span>
<span style="left:357.20px;top:344.00px;font-size:14px;color:#253858;letter-spacing:-1.050px;-webkit-text-stroke:0.15px #F4F5F7;">GLOBAL</span>
<span style="left:473.70px;top:345.00px;font-size:14px;color:#172B4D;letter-spacing:0.092px;-webkit-text-stroke:0.15px #FFFFFF;">blank group</span>
<span style="left:601.60px;top:349.00px;font-size:10.4px;color:#006644;font-weight:700;letter-spacing:-0.687px;">SCOPE</span>
<span style="left:722.20px;top:345.00px;font-size:14px;color:#0052CC;letter-spacing:0.414px;-webkit-text-stroke:0.35px #0052CC;">admin</span>
<span style="left:1001.70px;top:345.00px;font-size:14px;color:#0052CC;letter-spacing:0.439px;-webkit-text-stroke:0.35px #0052CC;">admin</span>
<span style="left:1188.00px;top:345.00px;font-size:14px;color:#0052CC;letter-spacing:0.514px;-webkit-text-stroke:0.35px #0052CC;">admin</span>
<span style="left:830.80px;top:345.00px;font-size:14px;color:#172B4D;letter-spacing:0.088px;-webkit-text-stroke:0.15px #FFFFFF;">2/05/2024</span>
<span style="left:1312.50px;top:345.00px;font-size:14px;color:#172B4D;letter-spacing:0.025px;-webkit-text-stroke:0.15px #FFFFFF;">2/05/2024</span>
<span style="left:1426.50px;top:347.00px;font-size:12px;color:#FFFFFF;-webkit-text-stroke:0.3px #FFFFFF;">0</span>
<span style="left:112.90px;top:395.00px;font-size:14px;color:#0052CC;letter-spacing:-0.490px;-webkit-text-stroke:0.45px #0052CC;">IT</span>
<span style="left:357.20px;top:400.00px;font-size:14px;color:#253858;letter-spacing:-1.050px;-webkit-text-stroke:0.15px #F4F5F7;">GLOBAL</span>
<span style="left:472.70px;top:401.00px;font-size:14px;color:#172B4D;letter-spacing:-0.061px;-webkit-text-stroke:0.15px #FFFFFF;">My scope</span>
<span style="left:601.60px;top:404.00px;font-size:10.6px;color:#42526E;font-weight:700;letter-spacing:0.640px;">OW...</span>
<span style="left:721.30px;top:401.00px;font-size:14px;color:#0052CC;letter-spacing:0.074px;-webkit-text-stroke:0.35px #0052CC;">Lillian As...</span>
<span style="left:1001.10px;top:401.00px;font-size:14px;color:#0052CC;letter-spacing:0.076px;-webkit-text-stroke:0.35px #0052CC;">Lillian Ashley</span>
<span style="left:1188.00px;top:401.00px;font-size:14px;color:#0052CC;letter-spacing:0.514px;-webkit-text-stroke:0.35px #0052CC;">admin</span>
<span style="left:830.80px;top:401.00px;font-size:14px;color:#172B4D;letter-spacing:0.088px;-webkit-text-stroke:0.15px #FFFFFF;">2/02/2024</span>
<span style="left:1312.50px;top:401.00px;font-size:14px;color:#172B4D;letter-spacing:0.025px;-webkit-text-stroke:0.15px #FFFFFF;">2/02/2024</span>
<span style="left:1426.50px;top:403.00px;font-size:12px;color:#FFFFFF;-webkit-text-stroke:0.3px #FFFFFF;">0</span>
<span style="left:112.90px;top:451.00px;font-size:14px;color:#0052CC;letter-spacing:-0.490px;-webkit-text-stroke:0.45px #0052CC;">IT</span>
<span style="left:128.40px;top:451.00px;font-size:14px;color:#0052CC;letter-spacing:0.153px;-webkit-text-stroke:0.45px #0052CC;">Projekt</span>
<span style="left:357.20px;top:456.00px;font-size:14px;color:#253858;letter-spacing:-1.050px;-webkit-text-stroke:0.15px #F4F5F7;">GLOBAL</span>
<span style="left:473.70px;top:457.00px;font-size:14px;color:#172B4D;letter-spacing:-0.215px;-webkit-text-stroke:0.15px #FFFFFF;">3 owners</span>
<span style="left:601.60px;top:460.00px;font-size:10.6px;color:#42526E;font-weight:700;letter-spacing:0.640px;">OW...</span>
<span style="left:722.30px;top:457.00px;font-size:14px;color:#0052CC;letter-spacing:-0.270px;-webkit-text-stroke:0.35px #0052CC;">John Snow</span>
<span style="left:1001.10px;top:457.00px;font-size:14px;color:#0052CC;letter-spacing:0.076px;-webkit-text-stroke:0.35px #0052CC;">Lillian Ashley</span>
<span style="left:1186.90px;top:457.00px;font-size:14px;color:#0052CC;letter-spacing:0.092px;-webkit-text-stroke:0.35px #0052CC;">Lillian Ashley</span>
<span style="left:830.80px;top:457.00px;font-size:14px;color:#172B4D;letter-spacing:0.088px;-webkit-text-stroke:0.15px #FFFFFF;">2/02/2024</span>
<span style="left:1312.50px;top:457.00px;font-size:14px;color:#172B4D;letter-spacing:0.025px;-webkit-text-stroke:0.15px #FFFFFF;">2/02/2024</span>
<span style="left:1426.50px;top:459.00px;font-size:12px;color:#FFFFFF;-webkit-text-stroke:0.3px #FFFFFF;">0</span>
<span style="left:113.20px;top:507.00px;font-size:14px;color:#0052CC;letter-spacing:0.309px;-webkit-text-stroke:0.45px #0052CC;">default</span>
<span style="left:160.90px;top:507.00px;font-size:14px;color:#0052CC;letter-spacing:-0.490px;-webkit-text-stroke:0.45px #0052CC;">IT</span>
<span style="left:177.00px;top:507.00px;font-size:14px;color:#0052CC;letter-spacing:0.144px;-webkit-text-stroke:0.45px #0052CC;">+problem</span>
<span style="left:357.20px;top:512.00px;font-size:14px;color:#253858;letter-spacing:-0.187px;-webkit-text-stroke:0.15px #F4F5F7;">3 owners</span>
<span style="left:473.70px;top:513.00px;font-size:14px;color:#172B4D;letter-spacing:-0.215px;-webkit-text-stroke:0.15px #FFFFFF;">3 owners</span>
<span style="left:601.60px;top:516.00px;font-size:10.6px;color:#42526E;font-weight:700;letter-spacing:0.640px;">OW...</span>
<span style="left:722.20px;top:513.00px;font-size:14px;color:#0052CC;letter-spacing:0.414px;-webkit-text-stroke:0.35px #0052CC;">admin</span>
<span style="left:1001.70px;top:513.00px;font-size:14px;color:#0052CC;letter-spacing:0.439px;-webkit-text-stroke:0.35px #0052CC;">admin</span>
<span style="left:1188.00px;top:513.00px;font-size:14px;color:#0052CC;letter-spacing:0.514px;-webkit-text-stroke:0.35px #0052CC;">admin</span>
<span style="left:829.80px;top:513.00px;font-size:14px;color:#172B4D;letter-spacing:0.213px;-webkit-text-stroke:0.15px #FFFFFF;">1/25/2024</span>
<span style="left:1311.50px;top:513.00px;font-size:14px;color:#172B4D;letter-spacing:0.150px;-webkit-text-stroke:0.15px #FFFFFF;">1/25/2024</span>
<span style="left:1426.50px;top:515.00px;font-size:12px;color:#FFFFFF;-webkit-text-stroke:0.3px #FFFFFF;">2</span>
<div style="left:11px;top:210px;width:281px;height:48px;box-sizing:border-box;border:3px solid #E8453E"></div>
<div style="left:90px;top:279px;width:197px;height:271px;box-sizing:border-box;border:3px solid #E8453E"></div>
<svg style="left:160px;top:334px" width="17" height="23" viewBox="0 0 17 23"><rect x="1.3" y="1.3" width="14.4" height="20.4" fill="none" stroke="#E8453E" stroke-width="2.6"/></svg>
<div style="left:106px;top:387px;width:24px;height:29px;box-sizing:border-box;border:3px solid #E8453E"></div>
<div style="left:108px;top:443px;width:20px;height:26px;box-sizing:border-box;border:3px solid #E8453E"></div>
<svg style="left:158px;top:501px" width="19" height="25" viewBox="0 0 19 25"><rect x="1.4" y="1.4" width="16.2" height="22.2" fill="none" stroke="#E8453E" stroke-width="2.8"/></svg>
<div style="left:127.9px;top:167.7px;width:40.4px;height:40.4px;border-radius:50%;background:#E8453E;box-shadow:0 2px 4px rgba(0,0,0,.4)"></div>
<svg style="left:138px;top:172px" width="20" height="30" viewBox="138 172 20 30"><path d="M150.9 176.1L148.5 176.1C147 178.3 144.8 180 141.8 181.3L142.7 183.8C144.7 183 146.5 181.9 147.7 180.5L147.7 198.4L150.9 198.4Z" fill="#fff"/></svg>
</div></body></html>
